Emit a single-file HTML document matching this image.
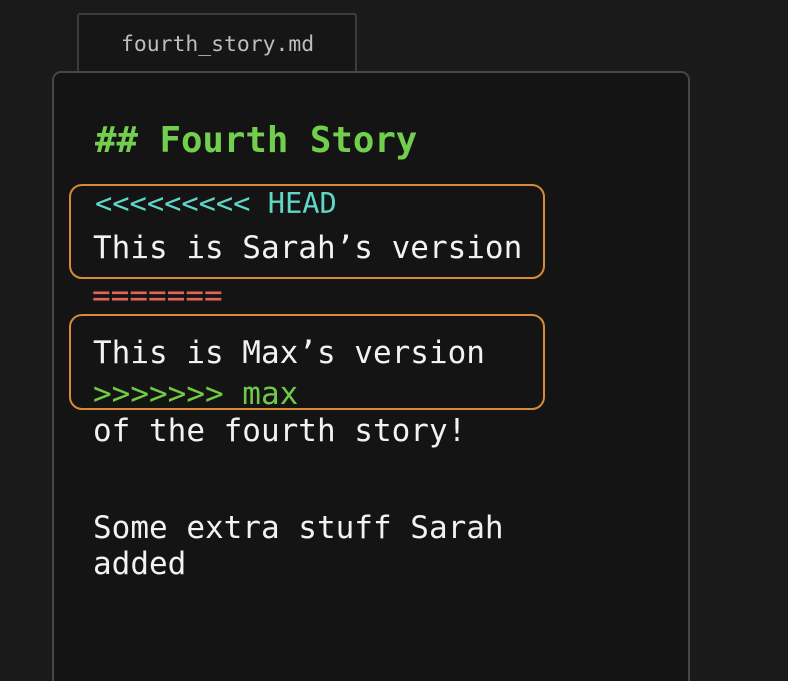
<!DOCTYPE html>
<html><head><meta charset="utf-8"><style>
html,body{margin:0;padding:0;width:788px;height:681px;overflow:hidden;}
body{background:#1a1a1a;position:relative;font-family:"DejaVu Sans Mono","Liberation Mono",monospace;}
.tab{position:absolute;left:77px;top:13px;width:280px;height:60px;border:2px solid #3c3c3c;border-bottom:none;border-radius:3px 3px 0 0;background:#161616;box-sizing:border-box;}
.tab span{position:absolute;left:42px;top:18px;font-size:21.4px;line-height:24px;color:#bdbdbd;}
.panel{position:absolute;left:52px;top:71px;width:638px;height:640px;border:2px solid #474747;border-radius:9px;background:#141414;box-sizing:border-box;}
.t{position:absolute;white-space:pre;line-height:1;}
.w{color:#f2f2f2;font-size:31px;}
.box{position:absolute;left:69px;width:476px;border:2px solid #d88a36;border-radius:13px;box-sizing:border-box;}
</style></head><body>
<div class="tab"><span>fourth_story.md</span></div>
<div class="panel"></div>
<div class="box" style="top:184px;height:95px;"></div>
<div class="box" style="top:314px;height:96px;"></div>
<div class="t" style="left:95px;top:123px;font-size:35.7px;font-weight:bold;color:#72cf4e;">## Fourth Story</div>
<div class="t" style="left:95px;top:189px;font-size:28.7px;color:#5fd6c6;">&lt;&lt;&lt;&lt;&lt;&lt;&lt;&lt;&lt; HEAD</div>
<div class="t w" style="left:93px;top:233px;">This is Sarah’s version</div>
<div class="t" style="left:92px;top:281px;font-size:31px;color:#e4655a;">=======</div>
<div class="t w" style="left:93px;top:338px;">This is Max’s version</div>
<div class="t" style="left:93px;top:379px;font-size:31px;color:#6fca45;">&gt;&gt;&gt;&gt;&gt;&gt;&gt; max</div>
<div class="t w" style="left:93px;top:416px;">of the fourth story!</div>
<div class="t w" style="left:93px;top:513px;">Some extra stuff Sarah</div>
<div class="t w" style="left:93px;top:549px;">added</div>
</body></html>
